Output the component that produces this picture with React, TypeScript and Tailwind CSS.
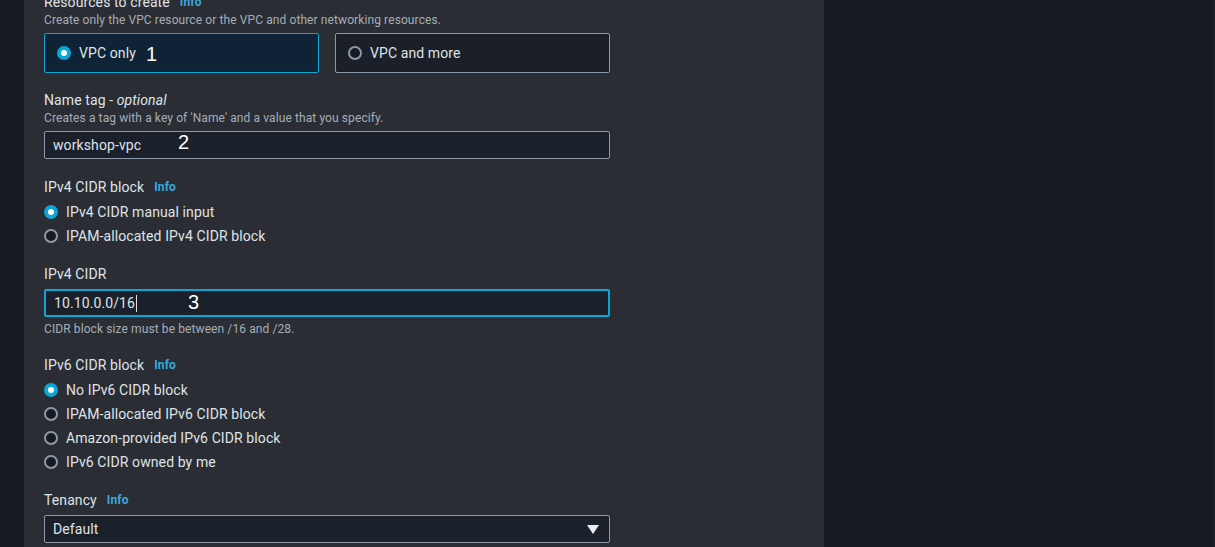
import React, { useState } from 'react';

const font = { fontFamily: 'Roboto, "Noto Sans", sans-serif', letterSpacing: '0.1px' };

const InfoLink = () => (
  <span className="ml-[10px] text-[12px] font-bold text-[#39a9dc]">Info</span>
);

const Radio = ({ checked }: { checked: boolean }) =>
  checked ? (
    <span className="flex h-[14px] w-[14px] shrink-0 items-center justify-center rounded-full bg-[#0ba5d6]">
      <span className="h-[6px] w-[6px] rounded-full bg-white" />
    </span>
  ) : (
    <span className="h-[14px] w-[14px] shrink-0 rounded-full border-2 border-[#8d99a8] bg-[#161b22]" />
  );

interface Option {
  id: string;
  label: string;
}

const RadioGroup = ({
  options,
  value,
  onChange,
}: {
  options: Option[];
  value: string;
  onChange: (v: string) => void;
}) => (
  <div className="mt-[3px] flex flex-col">
    {options.map(o => (
      <button
        key={o.id}
        type="button"
        onClick={() => onChange(o.id)}
        className="flex h-[24px] items-center gap-[8px] text-left text-[14px] text-[#dfe3e8]"
      >
        <Radio checked={value === o.id} />
        <span>{o.label}</span>
      </button>
    ))}
  </div>
);

const Label = ({ children, info }: { children: React.ReactNode; info?: boolean }) => (
  <div className="flex h-[20px] items-center text-[14px] text-[#dfe3e8]">
    <span>{children}</span>
    {info && <InfoLink />}
  </div>
);

const Hint = ({ children }: { children: React.ReactNode }) => (
  <div className="h-[16px] text-[12px] leading-[16px] text-[#a5adb8]">{children}</div>
);

// Anotações brancas sobre a captura
const Marker = ({ n, className }: { n: string; className: string }) => (
  <span
    className={`pointer-events-none absolute text-[20px] leading-none text-white ${className}`}
    style={{ fontFamily: '"Liberation Sans", Arial, sans-serif' }}
  >
    {n}
  </span>
);

export default function App() {
  const [recurso, setRecurso] = useState('vpc');
  const [ipv4, setIpv4] = useState('manual');
  const [ipv6, setIpv6] = useState('none');
  const [nome, setNome] = useState('workshop-vpc');
  const [cidr, setCidr] = useState('10.10.0.0/16');

  return (
    <div className="flex h-[547px] w-full overflow-hidden bg-[#161a21]" style={font}>
      <div className="w-[24px] shrink-0 bg-[#161920]" />

      <div className="w-[800px] shrink-0 bg-[#2a2d33] pl-[20px]">
        <div className="w-[566px]">
          {/* Recursos */}
          <div className="-mt-[8px]">
            <Label info>Resources to create</Label>
          </div>
          <Hint>Create only the VPC resource or the VPC and other networking resources.</Hint>
          <div className="mt-[5px] grid grid-cols-2 gap-[16px]">
            <button
              type="button"
              onClick={() => setRecurso('vpc')}
              className={`relative flex h-[40px] items-center gap-[8px] rounded-[2px] border pl-[12px] text-[14px] text-[#dfe3e8] ${
                recurso === 'vpc' ? 'border-[#0ba5d6] bg-[#0f2336]' : 'border-[#8d99a8] bg-[#1a1f28]'
              }`}
            >
              <Radio checked={recurso === 'vpc'} />
              <span>VPC only</span>
              <Marker n="1" className="left-[101px] top-[10px]" />
            </button>
            <button
              type="button"
              onClick={() => setRecurso('more')}
              className={`flex h-[40px] items-center gap-[8px] rounded-[2px] border pl-[12px] text-[14px] text-[#dfe3e8] ${
                recurso === 'more' ? 'border-[#0ba5d6] bg-[#0f2336]' : 'border-[#8d99a8] bg-[#1a1f28]'
              }`}
            >
              <Radio checked={recurso === 'more'} />
              <span>VPC and more</span>
            </button>
          </div>

          {/* Name tag */}
          <div className="mt-[17px]">
            <Label>
              Name tag - <i>optional</i>
            </Label>
          </div>
          <Hint>Creates a tag with a key of 'Name' and a value that you specify.</Hint>
          <div className="relative mt-[5px]">
            <input
              value={nome}
              onChange={e => setNome(e.target.value)}
              className="block h-[28px] w-full rounded-[2px] border border-[#8d99a8] bg-[#1b212a] px-[8px] text-[14px] text-[#dfe3e8] outline-none"
            />
            <Marker n="2" className="left-[134px] top-[1px]" />
          </div>

          {/* IPv4 */}
          <div className="mt-[18px]">
            <Label info>IPv4 CIDR block</Label>
          </div>
          <RadioGroup
            value={ipv4}
            onChange={setIpv4}
            options={[
              { id: 'manual', label: 'IPv4 CIDR manual input' },
              { id: 'ipam', label: 'IPAM-allocated IPv4 CIDR block' },
            ]}
          />

          <div className="mt-[16px]">
            <Label>IPv4 CIDR</Label>
          </div>
          <div className="relative mt-[5px]">
            <div className="flex h-[28px] w-full items-center rounded-[2px] border-2 border-[#0ba5d6] bg-[#1b212a] px-[8px] text-[14px] text-[#dfe3e8]">
              <span>{cidr}</span>
              <span className="ml-[1px] h-[17px] w-px bg-[#dfe3e8]" />
            </div>
            <input
              aria-label="IPv4 CIDR"
              value={cidr}
              onChange={e => setCidr(e.target.value)}
              className="absolute inset-0 opacity-0"
            />
            <Marker n="3" className="left-[144px] top-[3px]" />
          </div>
          <div className="mt-[4px]">
            <Hint>CIDR block size must be between /16 and /28.</Hint>
          </div>

          {/* IPv6 */}
          <div className="mt-[18px]">
            <Label info>IPv6 CIDR block</Label>
          </div>
          <RadioGroup
            value={ipv6}
            onChange={setIpv6}
            options={[
              { id: 'none', label: 'No IPv6 CIDR block' },
              { id: 'ipam', label: 'IPAM-allocated IPv6 CIDR block' },
              { id: 'amazon', label: 'Amazon-provided IPv6 CIDR block' },
              { id: 'own', label: 'IPv6 CIDR owned by me' },
            ]}
          />

          {/* Tenancy */}
          <div className="mt-[16px]">
            <Label info>Tenancy</Label>
          </div>
          <div className="mt-[5px] flex h-[28px] w-full items-center justify-between rounded-[2px] border border-[#8d99a8] bg-[#1b212a] pl-[8px] pr-[10px] text-[14px] text-[#dfe3e8]">
            <span>Default</span>
            <svg width="12" height="9" viewBox="0 0 12 9">
              <path d="M0 0 H12 L6 9 Z" fill="#e9ebed" />
            </svg>
          </div>
        </div>
      </div>

      <div className="flex-1 bg-[#161a21]" />
      <div className="w-[2px] shrink-0 bg-[#1d2129]" />
    </div>
  );
}
